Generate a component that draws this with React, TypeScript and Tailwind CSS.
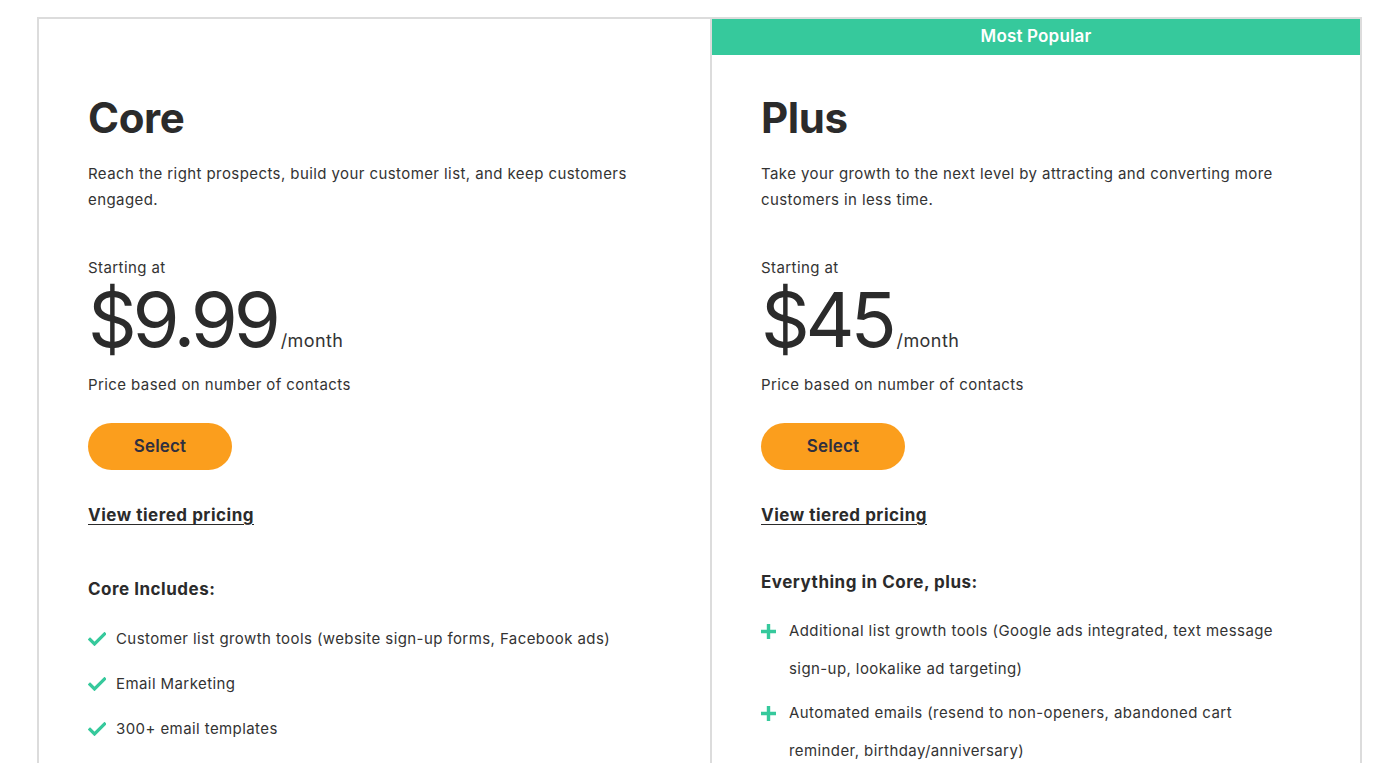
import React from "react";

type Plan = {
  name: string;
  blurb: string;
  price: string;
  listTitle: string;
  listIcon: "check" | "plus";
  items: string[];
  popular?: boolean;
};

const plans: Plan[] = [
  {
    name: "Core",
    blurb:
      "Reach the right prospects, build your customer list, and keep customers engaged.",
    price: "$9.99",
    listTitle: "Core Includes:",
    listIcon: "check",
    items: [
      "Customer list growth tools (website sign-up forms, Facebook ads)",
      "Email Marketing",
      "300+ email templates",
    ],
  },
  {
    name: "Plus",
    blurb:
      "Take your growth to the next level by attracting and converting more customers in less time.",
    price: "$45",
    listTitle: "Everything in Core, plus:",
    listIcon: "plus",
    items: [
      "Additional list growth tools (Google ads integrated, text message sign-up, lookalike ad targeting)",
      "Automated emails (resend to non-openers, abandoned cart reminder, birthday/anniversary)",
    ],
    popular: true,
  },
];

function CheckIcon() {
  return (
    <svg width="18" height="14" viewBox="0 0 18 14" className="shrink-0">
      <path d="M2 7.5l4.5 4.5L16.5 2" fill="none" stroke="#36c99c" strokeWidth="3.2" strokeLinecap="square" />
    </svg>
  );
}

function PlusIcon() {
  return (
    <svg width="15" height="15" viewBox="0 0 15 15" className="shrink-0">
      <path d="M7.5 0v15M0 7.5h15" stroke="#36c99c" strokeWidth="3.4" />
    </svg>
  );
}

function PlanCard({ plan }: { plan: Plan }) {
  const isPlus = plan.listIcon === "plus";
  return (
    <div
      className={
        plan.popular
          ? "w-[652px] border-2 border-[#dcdcdc] border-b-0"
          : "w-[673px] border-2 border-r-0 border-b-0 border-[#dcdcdc]"
      }
    >
      {/* Banner (empty spacer on the non-featured plan) */}
      {plan.popular ? (
        <div className="h-[36px] bg-[#36c99c] flex items-center justify-center text-white text-[17px] font-semibold tracking-[0.01em]">
          Most Popular
        </div>
      ) : (
        <div className="h-[36px]" />
      )}

      <div className="pl-[49px] pr-[50px] pt-[38px] text-[#333333] tracking-[0.026em]">
        <h2 className="text-[42px] font-bold leading-[50px] tracking-[-0.01em] text-[#2b2b2b]">
          {plan.name}
        </h2>
        <p className="mt-[18px] text-[15px] leading-[26px] max-w-[545px]">{plan.blurb}</p>

        <p className="mt-[42px] text-[15px] leading-[26px]">Starting at</p>
        <div className="flex items-baseline h-[76px]">
          <span className="text-[76px] leading-[76px] font-normal tracking-[-0.055em] text-[#2b2b2b]">
            {plan.price}
          </span>
          <span className="text-[18px] ml-[4px]">/month</span>
        </div>
        <p className="mt-[15px] text-[15px] leading-[26px]">Price based on number of contacts</p>

        <button className="mt-[25px] w-[144px] h-[47px] rounded-full bg-[#fb9e1d] text-[#2f2f3f] text-[17px] font-semibold tracking-[0.01em]">
          Select
        </button>

        <div className="mt-[32px]">
          <a href="#" className="text-[17px] font-bold leading-[26px] underline underline-offset-[3px] text-[#2b2b2b] tracking-[0.03em]">
            View tiered pricing
          </a>
        </div>

        <h3
          className={
            (isPlus ? "mt-[41px]" : "mt-[48px]") +
            " text-[17px] font-bold leading-[26px] text-[#2b2b2b] tracking-[0.03em]"
          }
        >
          {plan.listTitle}
        </h3>

        <ul className={isPlus ? "mt-[17px]" : "mt-[18px]"}>
          {plan.items.map((item) => (
            <li key={item} className="flex mb-[7px]">
              <span className="w-[28px] h-[38px] flex items-center shrink-0">
                {isPlus ? <PlusIcon /> : <CheckIcon />}
              </span>
              <span className="text-[15px] leading-[37.5px] max-w-[500px]">{item}</span>
            </li>
          ))}
        </ul>
      </div>
    </div>
  );
}

export default function App() {
  return (
    <div
      className="min-h-screen bg-white overflow-hidden"
      style={{ fontFamily: "Inter, 'Open Sans', sans-serif" }}
    >
      <div className="flex ml-[37px] mt-[17px] h-[760px]">
        {plans.map((p) => (
          <PlanCard key={p.name} plan={p} />
        ))}
      </div>
    </div>
  );
}
